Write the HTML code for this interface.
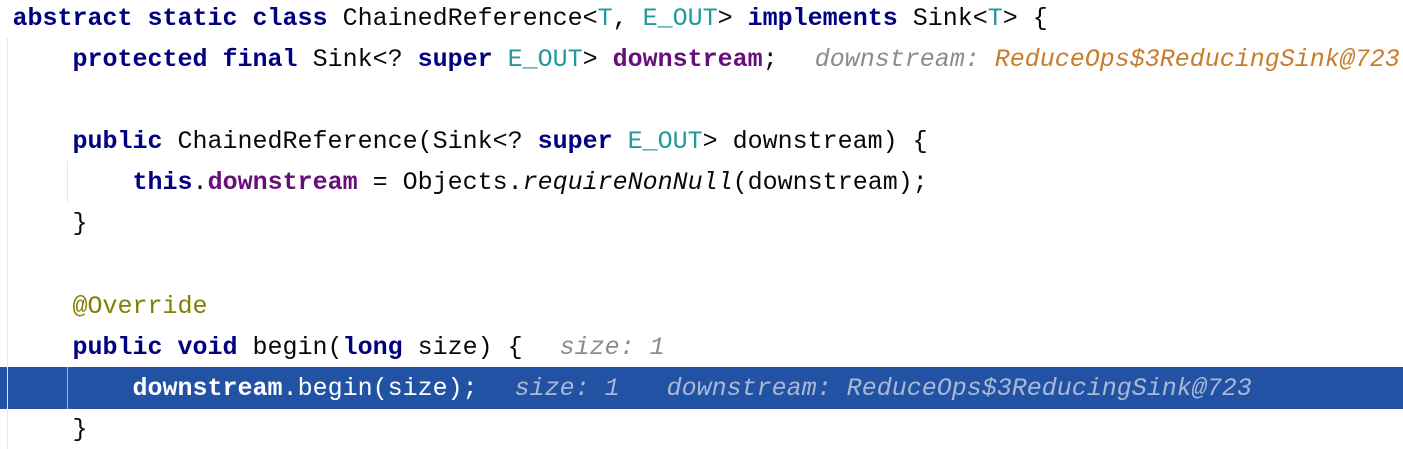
<!DOCTYPE html>
<html><head><meta charset="utf-8"><style>
html,body{margin:0;padding:0;background:#fff;width:1403px;height:449px;overflow:hidden;position:relative}
.code{position:absolute;left:12.5px;top:-2px;font-family:"Liberation Mono",monospace;font-size:25px;line-height:41.1px;color:#080808}
.ln{height:41.1px;position:relative;white-space:pre}
.k{color:#000080;font-weight:bold}
.f{color:#660e7a;font-weight:bold}
.t{color:#20999d}
.a{color:#808000}
.h{color:#8c8c8c;font-style:italic}
.o{color:#c77d2b;font-style:italic}
.i{font-style:italic}
.hl{position:absolute;left:0;top:367px;width:1403px;height:42px;background:#2152a3}
.g{position:absolute;background:#e6e6e6;width:1px}
.sel,.sel span{color:#fff}
.sel .hh{color:#aab8d6;font-style:italic;font-weight:normal}
</style></head><body>
<div class="hl"></div>
<div class="g" style="left:7px;top:38px;height:411px"></div>
<div class="g" style="left:67px;top:161px;height:41px"></div>
<div class="g" style="left:67px;top:367px;height:42px;background:#9fb2d6"></div>
<div class="code"><div class="ln"><span class="k">abstract static class</span> ChainedReference&lt;<span class="t">T</span>, <span class="t">E_OUT</span>&gt; <span class="k">implements</span> Sink&lt;<span class="t">T</span>&gt; {</div><div class="ln">    <span class="k">protected final</span> Sink&lt;? <span class="k">super</span> <span class="t">E_OUT</span>&gt; <span class="f">downstream</span>;  <span class="h" style="margin-left:7px">downstream: </span><span class="o">ReduceOps$3ReducingSink@723</span></div><div class="ln"> </div><div class="ln">    <span class="k">public</span> ChainedReference(Sink&lt;? <span class="k">super</span> <span class="t">E_OUT</span>&gt; downstream) {</div><div class="ln">        <span class="k">this</span>.<span class="f">downstream</span> = Objects.<span class="i">requireNonNull</span>(downstream);</div><div class="ln">    }</div><div class="ln"> </div><div class="ln">    <span class="a">@Override</span></div><div class="ln">    <span class="k">public void</span> begin(<span class="k">long</span> size) {  <span class="h" style="margin-left:7px">size: 1</span></div><div class="ln sel">        <span style="font-weight:bold">downstream</span>.begin(size);  <span class="hh" style="margin-left:7px">size: 1</span>   <span class="hh" style="margin-left:2px">downstream: ReduceOps$3ReducingSink@723</span></div><div class="ln">    }</div></div>
</body></html>
